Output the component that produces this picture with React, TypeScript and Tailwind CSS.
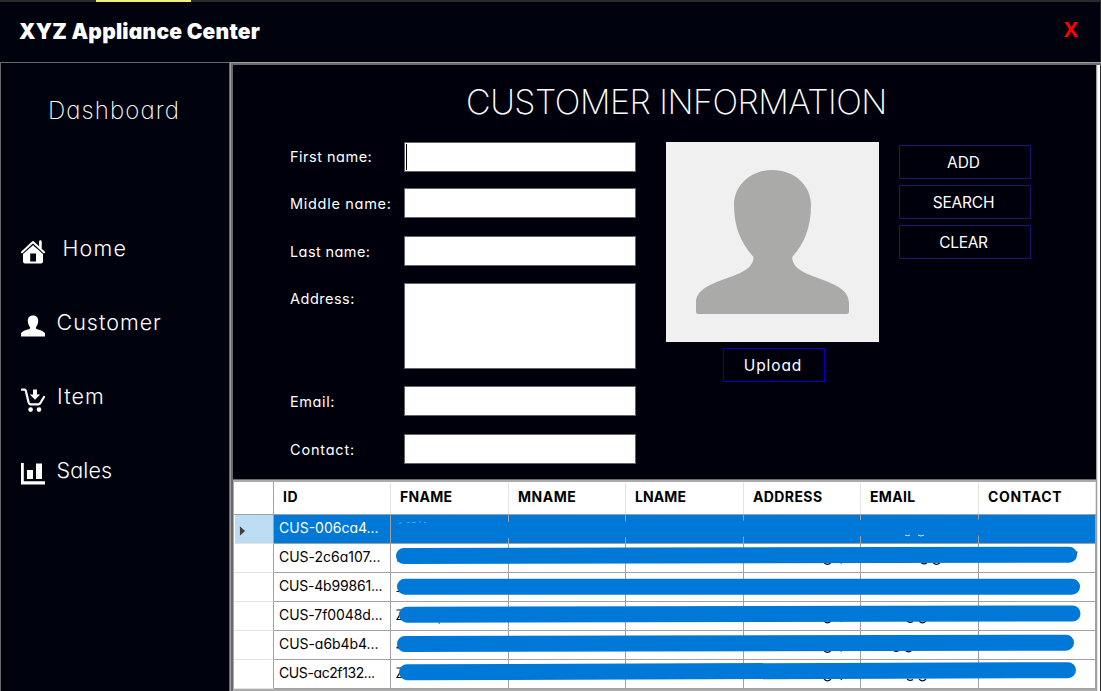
import type { ReactNode } from 'react';

type NavItem = { label: string; icon: ReactNode; textClass: string };

const HomeIcon = () => (
  <svg viewBox="0 0 24 24" className="size-6" fill="none">
    <path d="M1 12.2 12 2l11 10.2" stroke="white" strokeWidth="2" strokeLinecap="round" strokeLinejoin="round" />
    <path d="M19.4 8V1.6" stroke="white" strokeWidth="2.6" strokeLinecap="round" />
    <path
      fill="white"
      fillRule="evenodd"
      d="M12 5.2 22 14v7.5a2 2 0 0 1-2 2H4a2 2 0 0 1-2-2V14L12 5.2ZM9.2 13.6v7.8h5.8v-7.8H9.2Z"
    />
  </svg>
);

const PersonIcon = () => (
  <svg viewBox="0 0 24 24" className="size-6" fill="white">
    <path d="M12 1.5c3 0 5.2 1.8 5.2 5.2 0 2.6-.8 4.6-2.2 6.2v1.6c0 .8 7 1.6 9 4.8v3.2H0v-3.2c2-3.2 9-4 9-4.8v-1.6C7.6 11.3 6.8 9.300 6.8 6.700 6.8 3.300 9 1.500 12 1.500Z" />
  </svg>
);

const CartIcon = () => (
  <svg viewBox="0 0 24 24" className="size-6" fill="none">
    <path d="M1 1.700h2.500q1 0 1.300 1L7.600 14.500q.5 1.900 2.200 1.900h7.500q1.300 0 2-1.300L23 9" stroke="white" strokeWidth="2.2" strokeLinecap="round" strokeLinejoin="round" />
    <path d="M12 1.500h4v5h3.200L14 11.800 8.800 6.500H12Z" fill="white" />
    <circle cx="9.6" cy="21.6" r="2.3" fill="white" />
    <circle cx="18" cy="21.6" r="2.3" fill="white" />
  </svg>
);

const ChartIcon = () => (
  <svg viewBox="0 0 24 24" className="size-6" fill="white">
    <path d="M0 1h2.800v18.300H24V22.500H0ZM6 8h6v9H6ZM15 1.500h6V17h-6Z" />
  </svg>
);

const nav: NavItem[] = [
  { label: 'Home', icon: <HomeIcon />, textClass: 'ml-[17.5px] tracking-[1.2px]' },
  { label: 'Customer', icon: <PersonIcon />, textClass: 'ml-[11.5px] tracking-[1px]' },
  { label: 'Item', icon: <CartIcon />, textClass: 'ml-3 tracking-[1.1px]' },
  { label: 'Sales', icon: <ChartIcon />, textClass: 'ml-[11.5px] tracking-[0.15px]' },
];

const fields = [
  { label: 'First name:', labelClass: 'leading-[30px] tracking-[0.5px]', rowClass: '', boxClass: 'h-[30px]', focused: true },
  { label: 'Middle name:', labelClass: 'pt-px leading-[29px] tracking-[0.7px]', rowClass: 'mt-4', boxClass: 'h-[30px]' },
  { label: 'Last name:', labelClass: 'pt-px leading-[29px] tracking-[0.4px]', rowClass: 'mt-[18px]', boxClass: 'h-[30px]' },
  { label: 'Address:', labelClass: 'pt-px leading-[29px] tracking-[0.5px]', rowClass: 'mt-[17px]', boxClass: 'h-[86px]' },
  { label: 'Email:', labelClass: 'pt-px leading-[29px] tracking-[0.6px]', rowClass: 'mt-[17px]', boxClass: 'h-[30px]' },
  { label: 'Contact:', labelClass: 'pt-px leading-[29px] tracking-[0.8px]', rowClass: 'mt-[18px]', boxClass: 'h-[30px]' },
];

const actions = [
  { label: 'ADD', textClass: 'tracking-[0px]' },
  { label: 'SEARCH', textClass: 'tracking-[-0.2px]' },
  { label: 'CLEAR', textClass: 'tracking-[-0.3px]' },
];

const columns = [
  { label: 'ID', className: 'tracking-[0.5px]' },
  { label: 'FNAME', className: 'tracking-[0.3px]' },
  { label: 'MNAME', className: 'tracking-[0.5px]' },
  { label: 'LNAME', className: 'tracking-[0.1px]' },
  { label: 'ADDRESS', className: 'tracking-[0.4px]' },
  { label: 'EMAIL', className: 'tracking-[0.3px]' },
  { label: 'CONTACT', className: 'tracking-[0.7px]' },
];

const rows = [
  { id: 'CUS-006ca4...', tracking: 'tracking-[0px]' },
  { id: 'CUS-2c6a107...', tracking: 'tracking-[-0.02px]' },
  { id: 'CUS-4b99861...', tracking: 'tracking-[-0.2px]' },
  { id: 'CUS-7f0048d...', tracking: 'tracking-[-0.1px]' },
  { id: 'CUS-a6b4b4...', tracking: 'tracking-[-0.05px]' },
  { id: 'CUS-ac2f132...', tracking: 'tracking-[-0.4px]' },
];

const gridCols = 'grid grid-cols-[40px_117px_118px_117px_118px_117px_118px_117px]';

/* Marker strokes hiding the personal data, in the table body's own coordinates. */
const strokes = [
  { x1: 170, y1: 15.5, x2: 850, y2: 11.8 },
  { x1: 170, y1: 41, x2: 835, y2: 39.7 },
  { x1: 171, y1: 71.7, x2: 838, y2: 71.7 },
  { x1: 173, y1: 99.7, x2: 838.5, y2: 98.5 },
  { x1: 171, y1: 129, x2: 832, y2: 127.7 },
  { x1: 173, y1: 157.2, x2: 834, y2: 155.2 },
];

const descenders = [
  [590, 47.5], [590, 106], [590, 135.5], [590, 164],
];
const tails = [
  [687, 47.5], [673, 106], [659, 135], [673, 164],
];

const Avatar = () => (
  <svg viewBox="0 0 213 200" className="block h-[200px] w-[213px] bg-[#f0f0f0]" fill="#aaaaa8">
    <path d="M106.500 28C128 28 145 43 145 63c0 23-7 39-18.800 52 0 24 56.800 19.500 56.800 46v8.500q0 2.500-2.500 2.500H32.500Q30 172 30 169.500V161c0-26.500 57.500-22 57.500-46C75 101 68 85 68 63c0-20 17-35 38.500-35Z" />
  </svg>
);

function CustomerForm() {
  return (
    <section className="h-[414px] bg-[#00000c] text-white">
      <h1 className="pt-3 pl-[233px] text-[34px] leading-[50px] font-[230] tracking-[-0.5px]">CUSTOMER INFORMATION</h1>
      <div className="mt-[15px] flex pl-[57px]">
        <div>
          {fields.map((f) => (
            <div key={f.label} className={`flex ${f.rowClass}`}>
              <label className={`h-[30px] w-[114px] text-[14.5px] font-normal whitespace-nowrap ${f.labelClass}`}>{f.label}</label>
              <div className={`w-[232px] border border-[#646464] bg-white pt-px pl-px ${f.boxClass}`}>
                {f.focused && <div className="h-[26px] w-px bg-black" />}
              </div>
            </div>
          ))}
        </div>
        <div className="ml-[30px]">
          <Avatar />
          <button className="mt-1.5 ml-[57px] block h-[34px] w-[102px] border border-[#0000cd] pt-[2px] pr-0.5 text-[15.5px] font-normal tracking-[0.9px]">
            Upload
          </button>
        </div>
        <div className="mt-[3px] ml-5 flex flex-col gap-1.5">
          {actions.map((a) => (
            <button key={a.label} className={`h-[34px] w-[132px] border border-[#191970] pt-[2px] pr-[3px] text-[15.5px] font-normal ${a.textClass}`}>
              {a.label}
            </button>
          ))}
        </div>
      </div>
    </section>
  );
}

function CustomerTable() {
  return (
    <section className="h-[212px] border-t border-[#696969] text-[14px] text-black">
      <div className="h-[211px] border-t-2 border-b-2 border-l border-[#ababab] bg-white">
        <div className={`h-[33px] border-b border-[#a0a0a0] ${gridCols}`}>
          <div className="border-r border-[#a0a0a0]" />
          {columns.map((c) => (
            <div key={c.label} className={`mt-px border-r border-[#e3e3e3] pl-[9px] leading-[28px] font-bold ${c.className}`}>
              {c.label}
            </div>
          ))}
        </div>
        <div className="relative">
          {rows.map((r, i) => (
            <div key={r.id} className={`h-[29px] ${gridCols}`}>
              <div className={`flex items-center border-r border-b border-r-[#a0a0a0] border-b-[#e3e3e3] ${i === 0 ? 'ml-px bg-[#bcdcf4]' : ''}`}>
                {i === 0 && (
                  <svg viewBox="0 0 7 12" className="mt-[3px] ml-1 h-3 w-[7px]">
                    <path d="M.5.500 6.500 6 .5 11.500Z" fill="#404040" stroke="#f4f4f4" strokeWidth=".6" />
                  </svg>
                )}
              </div>
              <div
                className={`border-r border-b border-[#a0a0a0] pl-[5px] leading-[25px] font-[380] whitespace-nowrap ${r.tracking} ${i === 0 ? 'bg-[#0078d7] text-white' : ''}`}
              >
                {r.id}
              </div>
              {columns.slice(1).map((c) => (
                <div key={c.label} className={`border-r border-b border-[#a0a0a0] ${i === 0 ? 'bg-[#0078d7]' : ''}`} />
              ))}
            </div>
          ))}
          <svg viewBox="0 0 862 174" className="absolute top-0 left-0 h-[174px] w-[862px]" fill="none">
            <g stroke="#111" strokeWidth="1.2">
              {descenders.map(([x, y]) => (
                <path key={`${x}-${y}`} d={`M${x} ${y}q3.500 3.600 7 0M${x + 17} ${y + 1}l1-2`} />
              ))}
              {tails.map(([x, y]) => (
                <path key={`${x}-${y}`} d={`M${x} ${y}q3 2.500 6 .5M${x + 12} ${y}q3.500 3.600 7 0`} />
              ))}
              <path d="M843 36.500l-2.500 8M163 46h3M162.500 76.500h3M162.500 95h6l-5.500 9.500h6M162.500 133h4l-4-1M162.500 153h6l-5.500 9.500h6M205 107.500l.5 1" />
            </g>
            <g stroke="#0078d7" strokeWidth="16" strokeLinecap="round">
              {strokes.map((s) => (
                <line key={s.y1} {...s} />
              ))}
            </g>
            <path d="M165 8.500l3-1M173 7.500h3M178 7.500h4M185 7h2M190 7.500h2" stroke="#5aaaf0" strokeWidth=".8" />
            <path d="M671 20q2.500 1.500 5 0M684 20q3 2 6 0" stroke="#d4e8f8" strokeWidth="1" />
          </svg>
        </div>
      </div>
    </section>
  );
}

export default function App() {
  return (
    <div className="flex h-[691px] w-[1101px] flex-col overflow-hidden bg-[#00020e] font-['Inter',sans-serif] text-white [font-feature-settings:'cv11']">
      <div className="h-0.5 shrink-0 bg-[#2b2b2b] pl-24">
        <div className="h-full w-[95px] bg-[#f0f080]" />
      </div>
      <header className="flex h-[60px] shrink-0 items-center justify-between border-r border-[#2b2b2b] pr-[22px] pb-px pl-[19px]">
        <div className="text-[21px] leading-7 font-black tracking-[0.22px]">XYZ Appliance Center</div>
        <button className="pb-[5px] font-['Open_Sans',sans-serif] text-[21px] leading-7 font-bold text-[#ff0000]">X</button>
      </header>
      <div className="flex h-[629px] shrink-0">
        <aside className="w-[230px] border-t border-r border-l border-[#696969]">
          <div className="pt-8 pl-[47px] text-[24px] leading-8 font-[250] tracking-[1.1px]">Dashboard</div>
          <nav className="mt-[88px] pl-5">
            {nav.map((n) => (
              <div key={n.label} className="flex h-[74px] items-center">
                {n.icon}
                <span className={`pb-[9px] text-[21.5px] leading-7 font-[330] ${n.textClass}`}>{n.label}</span>
              </div>
            ))}
          </nav>
        </aside>
        <div className="flex-1 border-t border-l border-[#a0a0a0]">
          <div className="flex h-full border-t-2 border-l-2 border-[#696969]">
            <main className="w-[863px]">
              <CustomerForm />
              <CustomerTable />
            </main>
            <div className="w-px bg-[#a0a0a0]" />
            <div className="w-px bg-[#e3e3e3]" />
            <div className="w-0.5 bg-white" />
            <div className="w-px bg-[#2b2b2b]" />
          </div>
        </div>
      </div>
    </div>
  );
}
